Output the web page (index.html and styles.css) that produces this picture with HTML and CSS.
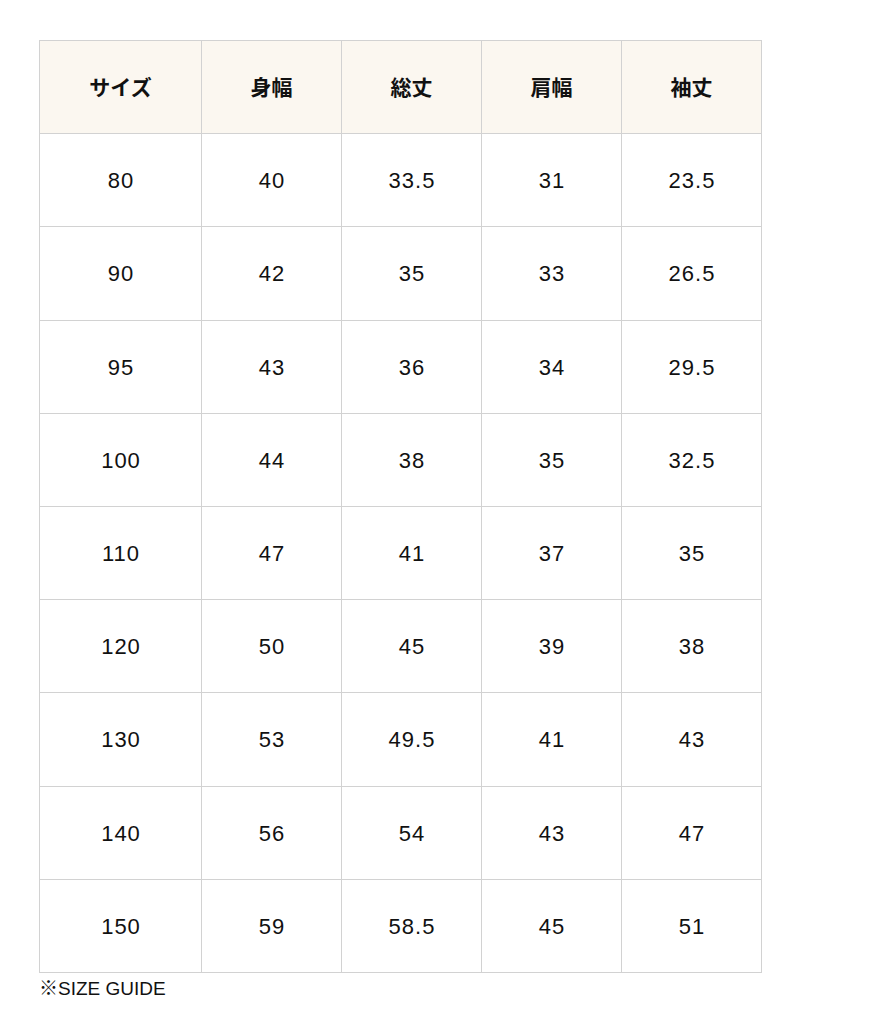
FILE: index.html
```html
<!DOCTYPE html>
<html lang="ja">
<head>
<meta charset="utf-8">
<link rel="stylesheet" href="styles.css">
</head>
<body>
<div class="wrap">
<table class="size-table">
<colgroup><col class="c1"><col class="cn"><col class="cn"><col class="cn"><col class="cn"></colgroup>
<thead>
<tr><th>サイズ</th><th>身幅</th><th>総丈</th><th>肩幅</th><th>袖丈</th></tr>
</thead>
<tbody>
<tr><td>80</td><td>40</td><td>33.5</td><td>31</td><td>23.5</td></tr>
<tr><td>90</td><td>42</td><td>35</td><td>33</td><td>26.5</td></tr>
<tr><td>95</td><td>43</td><td>36</td><td>34</td><td>29.5</td></tr>
<tr><td>100</td><td>44</td><td>38</td><td>35</td><td>32.5</td></tr>
<tr><td>110</td><td>47</td><td>41</td><td>37</td><td>35</td></tr>
<tr><td>120</td><td>50</td><td>45</td><td>39</td><td>38</td></tr>
<tr><td>130</td><td>53</td><td>49.5</td><td>41</td><td>43</td></tr>
<tr><td>140</td><td>56</td><td>54</td><td>43</td><td>47</td></tr>
<tr><td>150</td><td>59</td><td>58.5</td><td>45</td><td>51</td></tr>
</tbody>
</table>
<p class="note">※SIZE GUIDE</p>
</div>
</body>
</html>
```
FILE: styles.css
```css
html, body { margin: 0; padding: 0; background: #fff; }
body {
  font-family: "Liberation Sans", "Noto Sans CJK JP", sans-serif;
  color: #111;
}
.wrap { padding: 40px 0 0 39px; }
.size-table {
  border-collapse: collapse;
  width: 722px;
  table-layout: fixed;
}
.c1 { width: 162px; }
.cn { width: 140px; }
.size-table th, .size-table td {
  border: 1px solid #d2d2d2;
  text-align: center;
  vertical-align: middle;
  height: 90.2px;
  padding: 0;
  line-height: 1;
}
.size-table th {
  background: #fbf7f0;
  font-family: "Noto Sans CJK JP", sans-serif;
  font-weight: 700;
  font-size: 21px;
  padding-bottom: 2px;
}
.size-table td {
  font-weight: 400;
  font-size: 22px;
  letter-spacing: 1px;
  text-indent: 1px;
  padding-top: 2px;
}
.note {
  margin: 4px 0 0;
  font-size: 19px;
  line-height: 24px;
}
```
